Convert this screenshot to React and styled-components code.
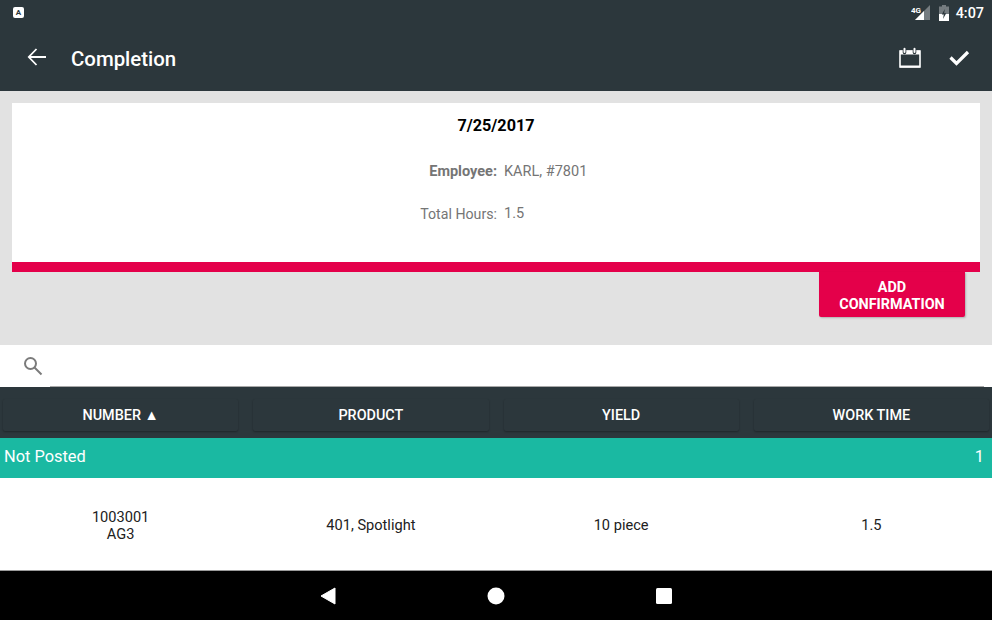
import React from "react";
import styled, { createGlobalStyle } from "styled-components";

const Global = createGlobalStyle`
  html, body { margin: 0; padding: 0; background: #e2e2e2; }
  body { font-family: Roboto, "Liberation Sans", sans-serif; }
`;

const Screen = styled.div`
  width: 992px;
  height: 620px;
  display: flex;
  flex-direction: column;
  overflow: hidden;
`;
const TopArea = styled.div`
  height: 91px;
  background: #2c373c;
  color: #fff;
  display: flex;
  flex-direction: column;
`;
const StatusBar = styled.div`
  height: 26px;
  display: flex;
  align-items: center;
  padding: 0 8px 0 13px;
  gap: 4px;
`;
const NoticeIcon = styled.div`
  width: 11px;
  height: 11px;
  margin-top: -2px;
  background: #fff;
  border-radius: 2px;
  color: #2c373c;
  font-size: 8px;
  font-weight: 700;
  line-height: 11px;
  text-align: center;
`;
const Spacer = styled.div`
  flex: 1;
`;
const Clock = styled.span`
  font-size: 14.4px;
  font-weight: 500;
  margin-left: 3px;
`;
const AppBar = styled.div`
  flex: 1;
  display: flex;
  align-items: center;
  padding: 0 21px 4px 26px;
`;
const Title = styled.h1`
  margin: 4px 0 0 23px;
  font-size: 20.4px;
  font-weight: 500;
  flex: 1;
`;
const Actions = styled.div`
  display: flex;
  align-items: center;
  gap: 26px;
`;
const Content = styled.div`
  height: 254px;
  padding: 12px 12px 0;
  box-sizing: border-box;
  background: #e2e2e2;
`;
const Card = styled.div`
  height: 169px;
  background: #fff;
  border-bottom: 10px solid #e4004a;
  box-sizing: border-box;
  display: flex;
  flex-direction: column;
`;
const DateLine = styled.div`
  text-align: center;
  font-size: 16.2px;
  font-weight: 700;
  color: #000;
  margin-top: 13px;
  line-height: 20px;
`;
const InfoRow = styled.div`
  display: grid;
  grid-template-columns: 485px 1fr;
  column-gap: 7px;
  margin-top: ${(p) => p.$top}px;
  font-size: 14.5px;
  line-height: 20px;
  color: #757575;
`;
const InfoLabel = styled.span`
  text-align: right;
  font-size: ${(p) => (p.$bold ? 14.5 : 14.2)}px;
  font-weight: ${(p) => (p.$bold ? 700 : 400)};
`;
const ButtonRow = styled.div`
  display: flex;
  justify-content: flex-end;
  padding-right: 15px;
`;
const AddButton = styled.button`
  width: 146px;
  height: 45px;
  padding: 2px 0 0;
  border: 0;
  border-radius: 0 0 2px 2px;
  background: #e4004a;
  color: #fff;
  font: 700 14.4px/17px Roboto, sans-serif;
  box-shadow: 1px 1px 2px rgba(0, 0, 0, 0.22);
`;
const SearchBar = styled.div`
  height: 42px;
  background: #fff;
  display: flex;
  align-items: center;
  padding-left: 23px;
  box-sizing: border-box;
  position: relative;
  &::after {
    content: "";
    position: absolute;
    left: 50px;
    right: 8px;
    bottom: 0;
    height: 1px;
    background: #a8a8a8;
  }
`;
const HeaderRow = styled.div`
  height: 51px;
  background: #2c373c;
  display: grid;
  grid-template-columns: repeat(4, 1fr);
  column-gap: 15px;
  padding: 12px 3px 7px;
  box-sizing: border-box;
`;
const HeaderCell = styled.div`
  background: #2c373c;
  border-radius: 2px;
  box-shadow: 0 1px 2px rgba(0, 0, 0, 0.3);
  color: #fff;
  font-size: 14.4px;
  font-weight: 500;
  display: flex;
  align-items: center;
  justify-content: center;
`;
const GroupRow = styled.div`
  height: 40px;
  background: #1ab9a2;
  color: #fff;
  font-size: 16.4px;
  display: flex;
  align-items: center;
  justify-content: space-between;
  padding: 0 8px 4px 4px;
  box-sizing: border-box;
`;
const DataRow = styled.div`
  height: 93px;
  background: #fff;
  display: grid;
  grid-template-columns: repeat(4, 1fr);
  column-gap: 15px;
  padding: 3px 3px 0;
  box-sizing: border-box;
  border-bottom: 1px solid #9a9a9a;
`;
const DataCell = styled.div`
  display: flex;
  align-items: center;
  justify-content: center;
  text-align: center;
  font-size: 14.6px;
  line-height: 17px;
  color: #212121;
`;
const NavBar = styled.div`
  flex: 1;
  background: #000;
  display: flex;
  align-items: center;
  justify-content: center;
  gap: 151px;
`;

const columns = ["NUMBER ▲", "PRODUCT", "YIELD", "WORK TIME"];

export default function App() {
  return (
    <Screen>
      <Global />
      <TopArea>
        <StatusBar>
          <NoticeIcon>A</NoticeIcon>
          <Spacer />
          <svg width="20" height="16" viewBox="0 0 20 16">
            <path d="M19 0v15H4z" fill="#fff" opacity="0.35" />
            <path d="M13 6v9H4z" fill="#fff" />
            <path d="M0 0h11v8H0z" fill="#2c373c" />
            <text x="0" y="7.500" fontSize="8" fontWeight="700" fill="#fff" fontFamily="Roboto">4G</text>
          </svg>
          <svg width="10" height="16" viewBox="0 0 10 16" style={{ marginLeft: 4 }}>
            <path d="M3 0h4v1.500h3V16H0V1.500h3z" fill="#fff" opacity="0.35" />
            <path d="M0 9h10v7H0z" fill="#fff" />
            <path d="M5.800 4 2.800 9.500h2L4 14l3.200-5.800h-2z" fill="#2c373c" />
          </svg>
          <Clock>4:07</Clock>
        </StatusBar>
        <AppBar>
          <svg width="22" height="22" viewBox="0 0 22 22" fill="none" stroke="#fff" strokeWidth="1.800">
            <path d="M20 11H3M10.500 3 2.800 11l7.700 8" />
          </svg>
          <Title>Completion</Title>
          <Actions>
            <svg width="22" height="22" viewBox="0 0 22 22" fill="none" stroke="#fff" style={{ marginTop: 2 }}>
              <path d="M1 4h20v16H1z" strokeWidth="1.600" />
              <path d="M1 5.500h20" strokeWidth="4" />
              <path d="M1 19.500h20" strokeWidth="2" />
              <path d="M5.500 2v3.500M15.500 2v3.500" strokeWidth="3.600" strokeLinecap="round" stroke="#2c373c" />
              <path d="M5.500 1.800v3.200M15.500 1.800v3.200" strokeWidth="2" strokeLinecap="round" />
            </svg>
            <svg width="24" height="24" viewBox="0 0 24 24" fill="none" stroke="#fff" strokeWidth="3.200">
              <path d="M3.500 12.500 9.500 18.500 21 7" />
            </svg>
          </Actions>
        </AppBar>
      </TopArea>
      <Content>
        <Card>
          <DateLine>7/25/2017</DateLine>
          <InfoRow $top={26}>
            <InfoLabel $bold>Employee:</InfoLabel>
            <span>KARL, #7801</span>
          </InfoRow>
          <InfoRow $top={22}>
            <InfoLabel>Total Hours:</InfoLabel>
            <span>1.5</span>
          </InfoRow>
        </Card>
        <ButtonRow>
          <AddButton>
            ADD
            <br />
            CONFIRMATION
          </AddButton>
        </ButtonRow>
      </Content>
      <SearchBar>
        <svg width="20" height="20" viewBox="0 0 20 20" fill="none" stroke="#7b7b7b" strokeWidth="2">
          <circle cx="7.500" cy="7.500" r="5.500" />
          <path d="m11.500 11.500 7 7" />
        </svg>
      </SearchBar>
      <HeaderRow>
        {columns.map((c) => (
          <HeaderCell key={c}>{c}</HeaderCell>
        ))}
      </HeaderRow>
      <GroupRow>
        <span>Not Posted</span>
        <span>1</span>
      </GroupRow>
      <DataRow>
        <DataCell>
          1003001
          <br />
          AG3
        </DataCell>
        <DataCell>401, Spotlight</DataCell>
        <DataCell>10 piece</DataCell>
        <DataCell>1.5</DataCell>
      </DataRow>
      <NavBar>
        <svg width="16" height="18" viewBox="0 0 16 18">
          <path d="M15 1v16L1 9z" fill="#fff" stroke="#fff" strokeLinejoin="round" />
        </svg>
        <svg width="18" height="18" viewBox="0 0 18 18">
          <circle cx="9" cy="9" r="8.500" fill="#fff" />
        </svg>
        <svg width="16" height="16" viewBox="0 0 16 16">
          <rect width="16" height="16" rx="1.500" fill="#fff" />
        </svg>
      </NavBar>
    </Screen>
  );
}
